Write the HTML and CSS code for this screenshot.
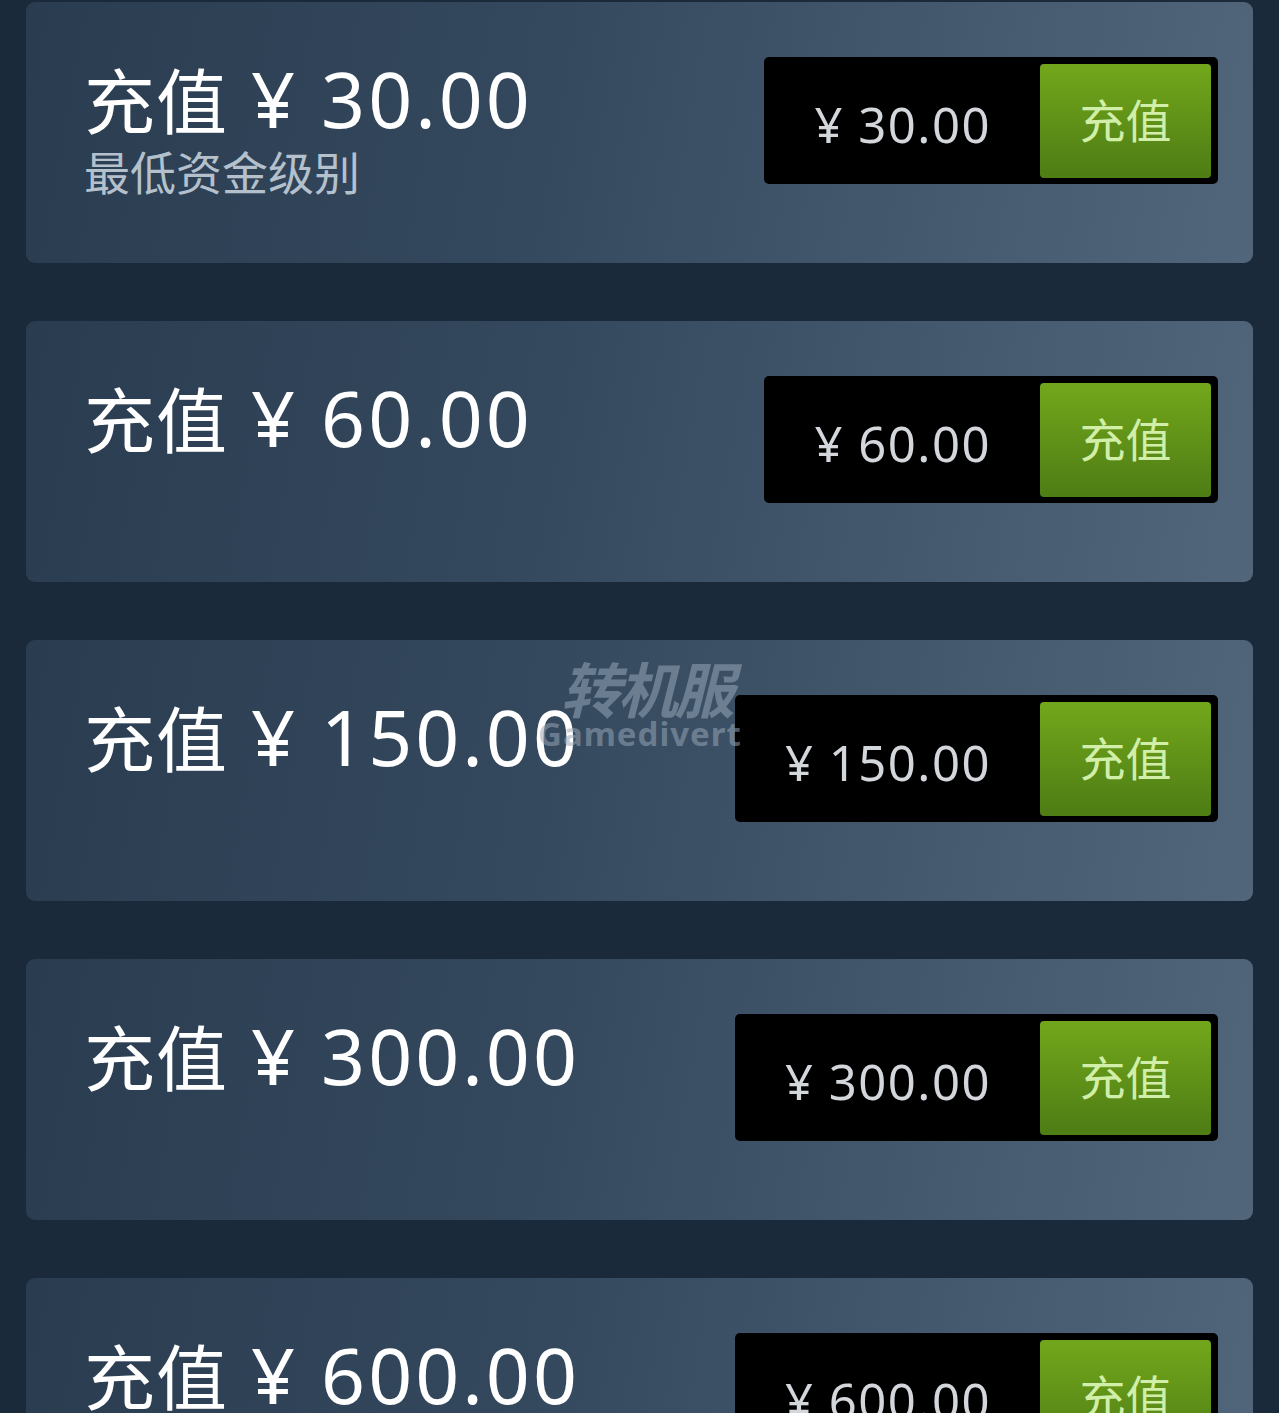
FILE: index.html
```html
<!DOCTYPE html>
<html lang="zh-CN">
<head>
<meta charset="utf-8">
<title>充值</title>
<link rel="stylesheet" href="styles.css">
</head>
<body>
<main class="list">
  <section class="card">
    <div class="info">
      <h2 class="title"><span class="cjk">充值</span> ¥ 30.00</h2>
      <p class="sub">最低资金级别</p>
    </div>
    <div class="buy">
      <span class="price">¥ 30.00</span>
      <a class="btn" href="#">充值</a>
    </div>
  </section>
  <section class="card">
    <div class="info">
      <h2 class="title"><span class="cjk">充值</span> ¥ 60.00</h2>
    </div>
    <div class="buy">
      <span class="price">¥ 60.00</span>
      <a class="btn" href="#">充值</a>
    </div>
  </section>
  <section class="card">
    <div class="info">
      <h2 class="title"><span class="cjk">充值</span> ¥ 150.00</h2>
    </div>
    <div class="buy">
      <span class="price">¥ 150.00</span>
      <a class="btn" href="#">充值</a>
    </div>
  </section>
  <section class="card">
    <div class="info">
      <h2 class="title"><span class="cjk">充值</span> ¥ 300.00</h2>
    </div>
    <div class="buy">
      <span class="price">¥ 300.00</span>
      <a class="btn" href="#">充值</a>
    </div>
  </section>
  <section class="card">
    <div class="info">
      <h2 class="title"><span class="cjk">充值</span> ¥ 600.00</h2>
    </div>
    <div class="buy">
      <span class="price">¥ 600.00</span>
      <a class="btn" href="#">充值</a>
    </div>
  </section>
</main>
<div class="mark">
  <span class="mark-cn">转机服</span>
  <span class="mark-en">Gamedivert</span>
</div>
</body>
</html>
```

FILE: styles.css
```css
html, body {
  margin: 0;
  padding: 0;
}

body {
  background: #1b2a3a;
  font-family: "Noto Sans", "Open Sans", "Noto Sans CJK SC", sans-serif;
  width: 1279px;
  height: 1413px;
  overflow: hidden;
  position: relative;
}

.list {
  display: flex;
  flex-direction: column;
  gap: 58px;
  padding: 2px 26px 0 26px;
}

.card {
  height: 261px;
  box-sizing: border-box;
  border-radius: 9px;
  background: linear-gradient(100deg, #2a3c50 0%, #34485d 40%, #45596f 75%, #52667b 100%);
  display: flex;
  justify-content: space-between;
  align-items: flex-start;
  padding: 0 35px 0 58px;
}

.info {
  padding-top: 50px;
}

.title {
  margin: 0;
  font-weight: 400;
  font-size: 77px;
  line-height: 90px;
  color: #ffffff;
  letter-spacing: 3px;
  white-space: nowrap;
}

.title .cjk {
  font-family: "Noto Sans CJK SC", sans-serif;
  font-size: 71px;
  letter-spacing: 1px;
}

.sub {
  margin: 0;
  font-size: 46px;
  line-height: 56px;
  color: #b4c0cc;
  white-space: nowrap;
}

.buy {
  margin-top: 55px;
  height: 127px;
  box-sizing: border-box;
  background: #000;
  border-radius: 5px;
  display: flex;
  align-items: center;
  padding: 7px 7px 6px 0;
}

.price {
  padding: 6px 49px 0 50px;
  font-size: 49px;
  letter-spacing: 1.5px;
  color: #d3d6da;
  white-space: nowrap;
}

.btn {
  width: 171px;
  height: 114px;
  box-sizing: border-box;
  padding-bottom: 6px;
  border-radius: 4px;
  background: linear-gradient(to bottom, #71a51b 5%, #4f7e15 95%);
  color: #d2efa9;
  font-size: 46px;
  text-decoration: none;
  display: flex;
  align-items: center;
  justify-content: center;
}

/* faint site watermark laid over the third row */
.mark {
  position: absolute;
  left: 538px;
  top: 656px;
  display: flex;
  flex-direction: column;
  align-items: flex-end;
  pointer-events: none;
  color: rgba(150, 166, 182, 0.55);
}

.mark-cn {
  font-family: "Noto Sans CJK SC", sans-serif;
  font-weight: 700;
  font-size: 60px;
  line-height: 62px;
  letter-spacing: -3px;
  transform: skewX(-14deg);
  margin-right: 4px;
}

.mark-en {
  font-family: "Noto Sans", sans-serif;
  font-weight: 700;
  font-size: 33px;
  line-height: 32px;
  letter-spacing: 1px;
}
```
